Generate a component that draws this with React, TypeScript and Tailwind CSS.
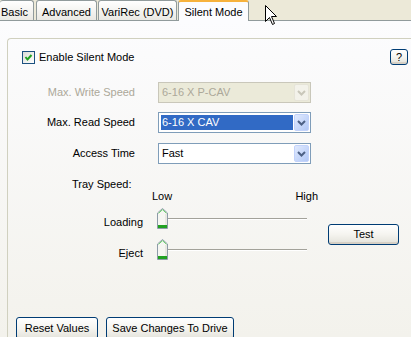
import React from 'react';

const Chevron = ({ color }: { color: string }) => (
  <svg width="9" height="6" viewBox="0 0 9 6">
    <path d="M1 1 L4.5 4.5 L8 1" stroke={color} strokeWidth="2" fill="none" />
  </svg>
);

const Combo = ({ value, disabled, selected }: { value: string; disabled?: boolean; selected?: boolean }) => (
  <div
    className={`flex h-[21px] w-[153px] border p-px ${
      disabled ? 'border-[#c9c7ba] bg-[#ebead9]' : 'border-[#7f9db9] bg-white'
    }`}
  >
    <div className="flex flex-1 items-center">
      <span
        className={`m-px flex h-[15px] flex-1 items-center pl-px leading-none ${
          selected ? 'bg-[#316ac5] text-white' : disabled ? 'text-[#aca899]' : 'text-black'
        }`}
      >
        {value}
      </span>
    </div>
    <div
      className={`flex w-[15px] items-center justify-center rounded-[2px] border ${
        disabled
          ? 'border-[#e6e4d8] bg-[#f3f2ea]'
          : 'border-[#c3d3fb] bg-gradient-to-br from-[#e1eafe] to-[#b2c8f6]'
      }`}
    >
      <Chevron color={disabled ? '#c9c7ba' : '#4d6185'} />
    </div>
  </div>
);

const XpButton = ({ label, className }: { label: string; className: string }) => (
  <div
    className={`flex items-center justify-center rounded-[3px] border border-[#003c74] bg-gradient-to-b from-white via-[#f5f4ef] to-[#e3e2da] shadow-[inset_0_-2px_0_#d6d0c5] ${className}`}
  >
    {label}
  </div>
);

const Thumb = () => (
  <svg width="11" height="21" viewBox="0 0 11 21">
    <path d="M0.5 5 L5.5 0.5 L10.5 5 V20.5 H0.5 Z" fill="#f6f6f2" stroke="#8d9ba8" />
    <path d="M1.5 5.3 L5.5 1.7 L9.5 5.3" fill="none" stroke="#6fd36f" />
    <rect x="1" y="17" width="9" height="3" fill="#21a121" />
    <rect x="8.5" y="6" width="1" height="11" fill="#dcdad0" />
  </svg>
);

const SliderRow = ({ label }: { label: string }) => (
  <div className="flex h-[21px]">
    <span className="w-[135px] self-end text-right leading-[13px]">{label}</span>
    <div className="ml-[14px] flex">
      <Thumb />
      <div className="mt-[10px] h-[2px] w-[139px] border-t border-b border-t-[#a3a29a] border-b-white" />
    </div>
  </div>
);

const FormRow = ({ label, disabled, children }: { label: string; disabled?: boolean; children: React.ReactNode }) => (
  <div className="flex items-center">
    <span className={`w-[127px] text-right ${disabled ? 'text-[#aca899]' : 'text-black'}`}>{label}</span>
    <div className="ml-[23px]">{children}</div>
  </div>
);

const Tab = ({ label, w, first }: { label: string; w: string; first?: boolean }) => (
  <div
    className={`flex h-[20px] items-center justify-center rounded-t-[3px] border-t border-r border-[#919b9c] bg-gradient-to-b from-white to-[#eae9e3] pt-[3px] ${
      first ? 'justify-start pl-px' : 'border-l'
    } ${w}`}
  >
    {label}
  </div>
);

export default function App() {
  return (
    <div className="relative h-[337px] w-[411px] overflow-hidden bg-[#ece9d8] font-['Liberation_Sans',Arial,sans-serif] text-[11px] text-black">
      {/* Tabs */}
      <div className="flex h-[21px] border-b border-[#919b9c]">
        <Tab label="Basic" w="w-[34px]" first />
        <div className="w-[2px]" />
        <Tab label="Advanced" w="w-[61px]" />
        <div className="w-px" />
        <Tab label="VariRec (DVD)" w="w-[79px]" />
        <div className="w-px" />
        <div className="relative z-10 flex h-[21px] w-[71px] items-center justify-center rounded-t-[3px] border-x border-t-2 border-x-[#919b9c] border-t-[#f7b23c] bg-[#fcfcfe] pt-px">
          Silent Mode
        </div>
      </div>

      {/* Page */}
      <div className="h-[316px] bg-gradient-to-b from-[#fcfcfe] to-[#f3f2ec] pl-[7px] pt-[17px]">
        <div className="h-full rounded-tl-[4px] border-l border-t border-[#d0d0bf]">
          <div className="flex h-[26px] items-end justify-between pl-[14px] pr-[3px]">
            <label className="flex h-[16px] items-center gap-[4px]">
              <span className="flex h-[13px] w-[13px] items-center justify-center border border-[#1c5180] bg-gradient-to-br from-[#dcdcd7] to-white">
                <svg width="9" height="9" viewBox="0 0 9 9">
                  <polyline points="1.5,4 3.5,6.5 7.5,2" fill="none" stroke="#21a121" strokeWidth="2" />
                </svg>
              </span>
              Enable Silent Mode
            </label>
            <XpButton label="?" className="h-[16px] w-[18px] text-[11px]" />
          </div>

          <div className="mt-[17px] flex flex-col gap-[9px]">
            <FormRow label="Max. Write Speed" disabled>
              <Combo value="6-16 X P-CAV" disabled />
            </FormRow>
            <FormRow label="Max. Read Speed">
              <Combo value="6-16 X CAV" selected />
            </FormRow>
            <div className="mt-px">
              <FormRow label="Access Time">
                <Combo value="Fast" />
              </FormRow>
            </div>
          </div>

          <div className="mt-[14px] pl-[64px] leading-[12px]">Tray Speed:</div>
          <div className="flex w-[310px] justify-between pl-[144px] leading-[12px]">
            <span>Low</span>
            <span>High</span>
          </div>

          <div className="mt-[6px] flex items-center">
            <div className="flex flex-col gap-[10px]">
              <SliderRow label="Loading" />
              <SliderRow label="Eject" />
            </div>
            <XpButton label="Test" className="ml-[21px] h-[21px] w-[71px]" />
          </div>

          <div className="mt-[57px] flex gap-[8px] pl-[8px]">
            <XpButton label="Reset Values" className="h-[23px] w-[82px]" />
            <XpButton label="Save Changes To Drive" className="h-[23px] w-[128px]" />
          </div>
        </div>
      </div>

      {/* Mouse cursor */}
      <svg className="absolute left-[265px] top-[5px]" width="13" height="21" viewBox="0 0 13 21">
        <path d="M0.5 0.5 V16.5 L4.5 12.5 L7.5 19.5 L9.5 18.5 L6.5 11.5 H11.5 Z" fill="white" stroke="black" />
      </svg>
    </div>
  );
}
